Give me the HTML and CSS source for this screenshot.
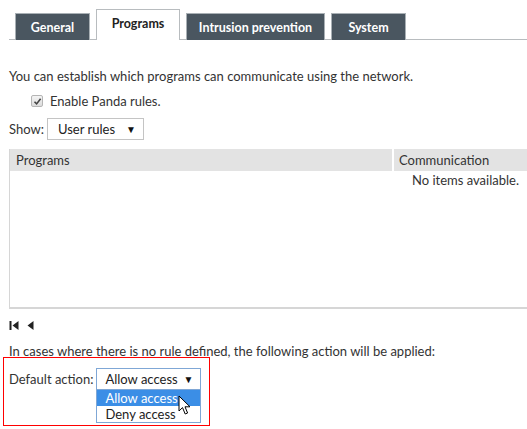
FILE: index.html
```html
<!DOCTYPE html>
<html>
<head>
<meta charset="utf-8">
<link rel="stylesheet" href="styles.css">
</head>
<body>
<div class="tabs">
  <div class="tab">General</div>
  <div class="tab active">Programs</div>
  <div class="tab wide">Intrusion prevention</div>
  <div class="tab">System</div>
</div>
<p class="intro">You can establish which programs can communicate using the network.</p>
<label class="check"><span class="box"><svg width="9" height="9" viewBox="0 0 9 9"><path d="M1.5 4.8 L3.6 6.9 L7.6 1.8" fill="none" stroke="#444" stroke-width="1.6"/></svg></span>Enable Panda rules.</label>
<div class="show">
  <span>Show:</span>
  <div class="select show-select"><span>User rules</span><span class="arrow">▼</span></div>
</div>
<div class="grid">
  <div class="grid-head">
    <div class="col-prog">Programs</div>
    <div class="col-comm">Communication</div>
  </div>
  <div class="grid-body">
    <div class="empty">No items available.</div>
  </div>
</div>
<div class="pager">
  <svg width="12" height="11" viewBox="0 0 12 11"><rect x="0.5" y="1" width="2" height="9" fill="#222"/><path d="M9.5 1 L3.5 5.5 L9.5 10 Z" fill="#222"/></svg>
  <svg width="10" height="11" viewBox="0 0 10 11"><path d="M7.5 1 L1.5 5.5 L7.5 10 Z" fill="#222"/></svg>
</div>
<p class="cases">In cases where there is no rule defined, the following action will be applied:</p>
<div class="highlight">
  <div class="action-row">
    <span class="action-label">Default action:</span>
    <div class="dd">
      <div class="select action-select"><span>Allow access</span><span class="arrow">▼</span></div>
      <div class="dd-list">
        <div class="opt selected">Allow access</div>
        <div class="opt">Deny access</div>
      </div>
      <svg class="cursor" width="16" height="22" viewBox="0 0 16 22"><path d="M1 1 L1 16 L4.5 12.6 L7.2 19 L9.6 18 L7 11.8 L12 11.8 Z" fill="#fff" stroke="#000" stroke-width="1" stroke-linejoin="round"/></svg>
    </div>
  </div>
</div>
</body>
</html>
```

FILE: styles.css
```css
* { box-sizing: border-box; }
html, body { margin: 0; padding: 0; background: #fff; }
body {
  font-family: Lato, "Open Sans", sans-serif;
  font-size: 13px;
  color: #333;
  width: 527px;
  height: 429px;
  overflow: hidden;
}
.tabs {
  display: flex;
  align-items: flex-end;
  gap: 6px;
  margin: 0 0 0 9px;
  padding: 10px 0 0 6px;
  height: 40px;
  border-bottom: 1px solid #b8bcbf;
}
.tab {
  height: 27px;
  width: 75px;
  background: #4a5660;
  border: 1px solid #a9b0b5;
  border-bottom: none;
  color: #fff;
  font-weight: bold;
  font-size: 12.5px;
  display: flex;
  align-items: center;
  justify-content: center;
  margin-bottom: -1px;
}
.tab.wide { width: 139px; }
.tab.active {
  height: 31px;
  width: 84px;
  background: #fff;
  color: #222;
  border-color: #b8bcbf;
  align-items: flex-start;
  padding-top: 6px;
}
.intro {
  margin: 28px 0 0 9px;
  line-height: 16px;
}
.check {
  display: flex;
  align-items: center;
  margin: 9px 0 0 31px;
  line-height: 16px;
}
.box {
  width: 12px;
  height: 12px;
  border: 1px solid #b5b5b5;
  border-radius: 2px;
  background: linear-gradient(#f4f4f4, #dcdcdc);
  display: flex;
  align-items: center;
  justify-content: center;
  margin-right: 7px;
}
.show {
  display: flex;
  align-items: center;
  margin: 9px 0 0 9px;
  gap: 3px;
}
.select {
  display: flex;
  align-items: center;
  justify-content: space-between;
  height: 22px;
  border: 1px solid #c4c4c4;
  background: #fff;
  color: #222;
}
.show-select { width: 97px; padding: 0 7px 0 10px; }
.arrow { font-size: 10px; color: #111; }
.grid {
  margin: 9px 0 0 9px;
  border-left: 1px solid #d6d6d6;
}
.grid-head {
  display: flex;
  height: 22px;
  background: #e3e3e3;
  align-items: center;
}
.col-prog { width: 384px; padding-left: 6px; border-right: 2px solid #fff; height: 22px; line-height: 22px; }
.col-comm { padding-left: 5px; }
.grid-body {
  height: 138px;
  border-bottom: 2px solid #d6d6d6;
}
.empty {
  text-align: right;
  padding: 1px 8px 0 0;
  line-height: 16px;
}
.pager {
  display: flex;
  gap: 5px;
  margin: 10px 0 0 9px;
  height: 12px;
  align-items: center;
}
.cases {
  margin: 12px 0 0 9px;
  line-height: 16px;
}
.highlight {
  margin: -2px 0 0 3px;
  width: 207px;
  height: 69px;
  border: 1px solid red;
  padding: 10px 0 0 5px;
}
.action-row {
  display: flex;
  align-items: flex-start;
}
.action-label { line-height: 22px; margin-right: 3px; }
.dd { position: relative; width: 105px; }
.action-select {
  width: 105px;
  border-color: #7fa7d6;
  padding: 0 7px 0 8px;
}
.dd-list {
  border: 1px solid #7fa7d6;
  border-top: none;
}
.opt { height: 16px; line-height: 16px; padding-left: 8px; color: #222; }
.opt.selected { background: #3b8ee6; color: #fff; }
.cursor { position: absolute; left: 82px; top: 27px; }
```
